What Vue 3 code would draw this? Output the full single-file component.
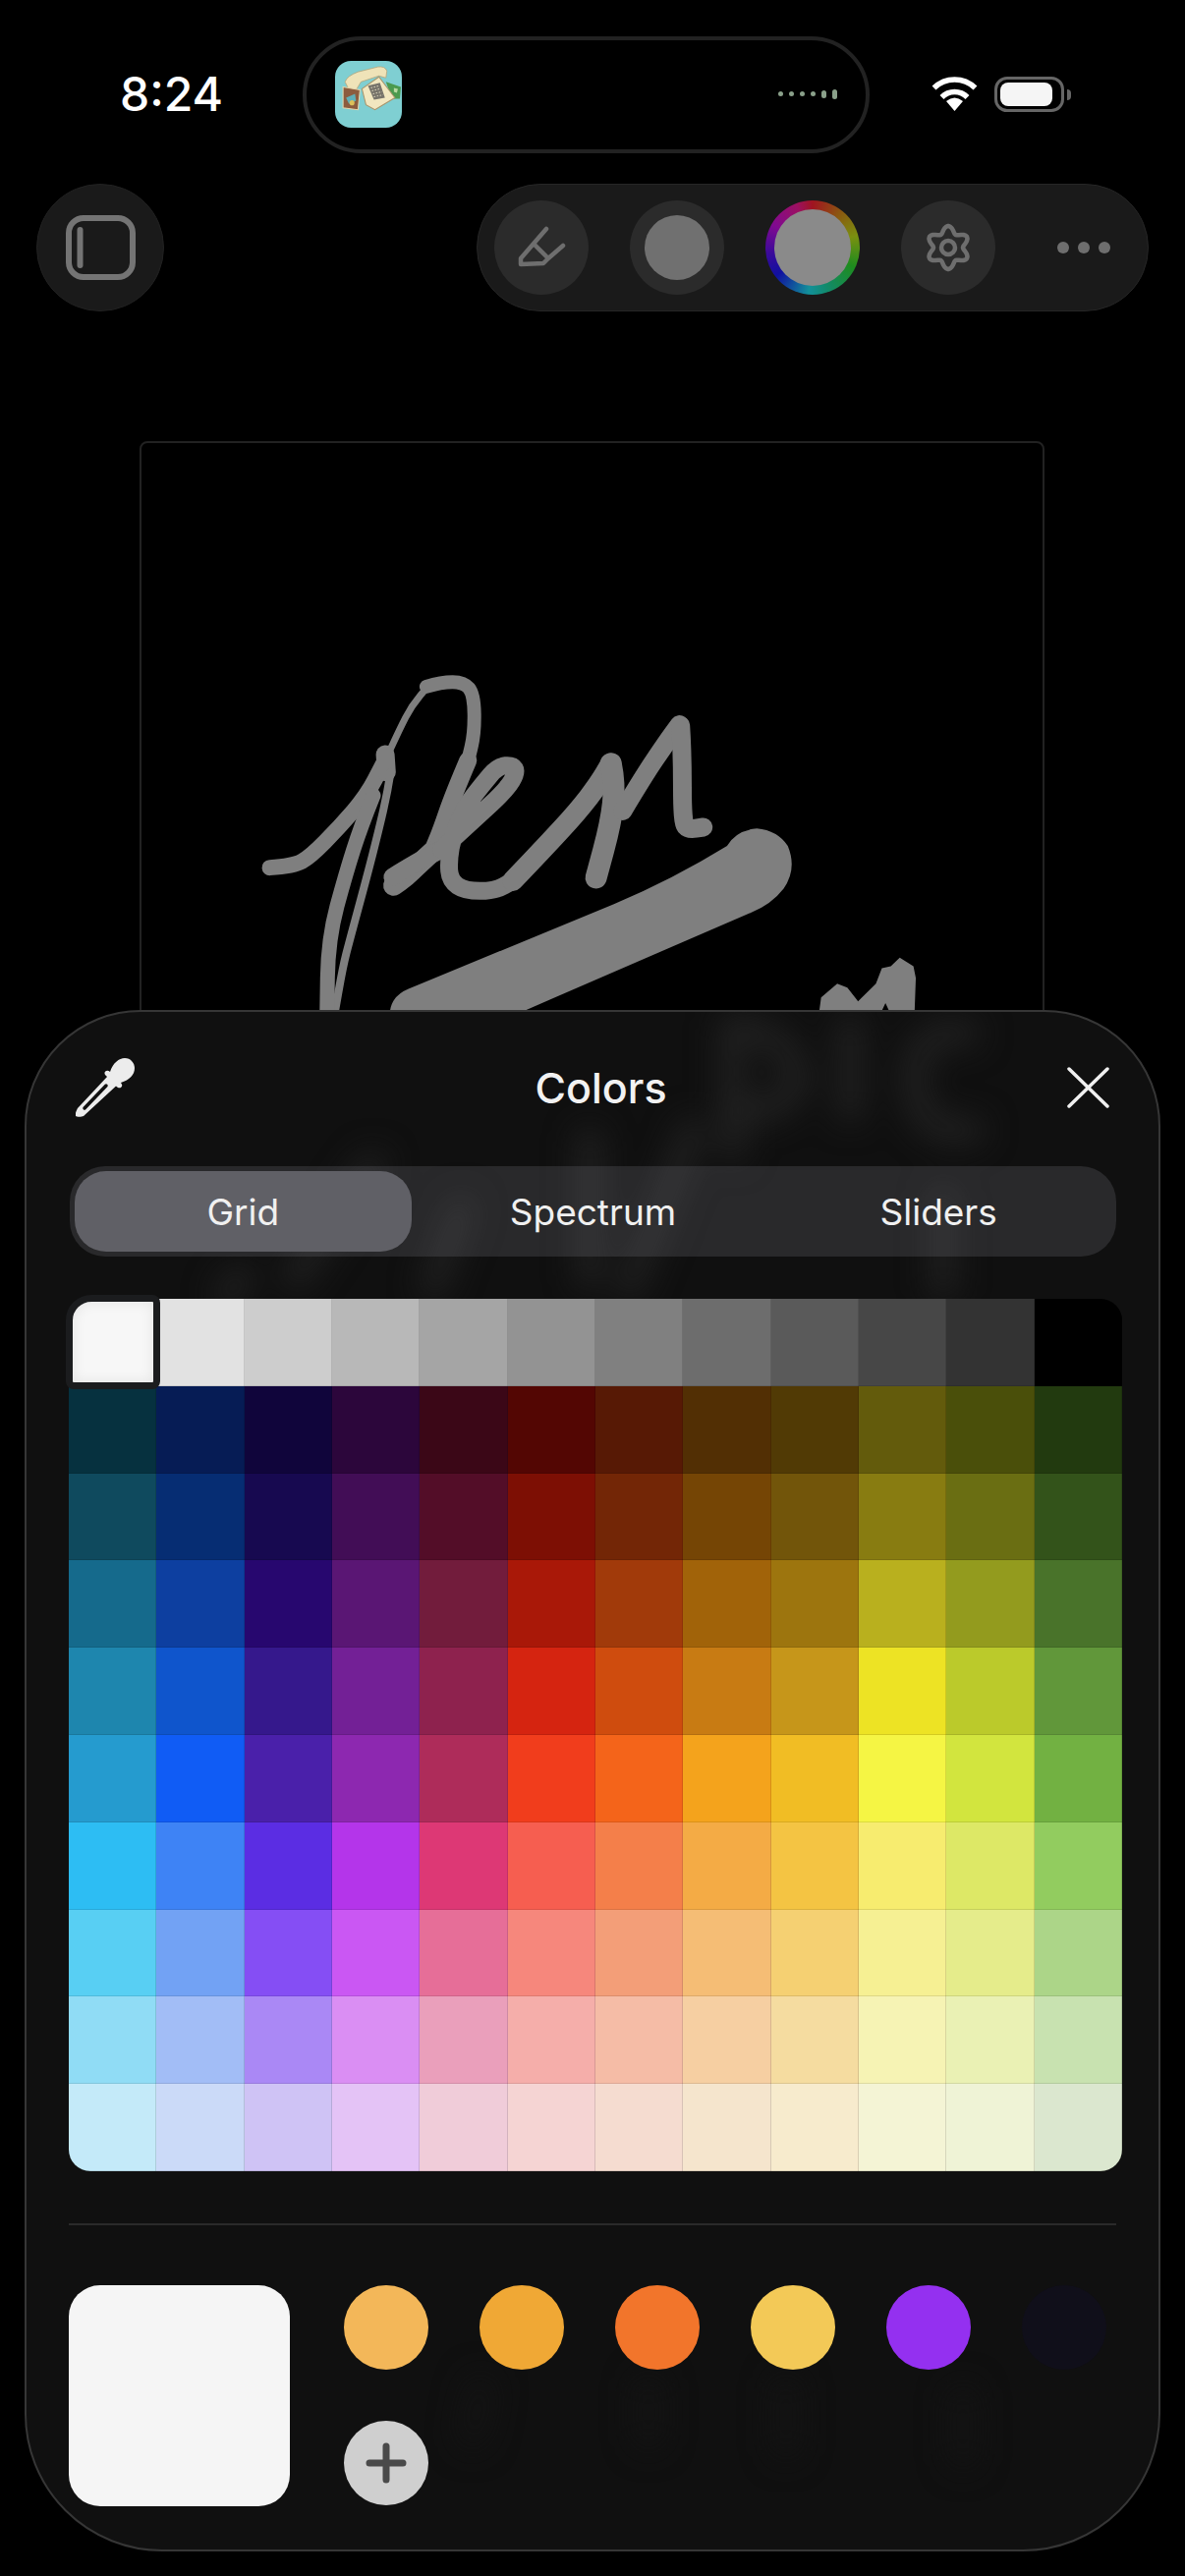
<template>
  <div class="screen">
    <div class="status">
      <span class="time">8:24</span>
      <div class="island">
        <svg class="app-icon" viewBox="0 0 67 67">
          <rect width="67" height="67" rx="16" fill="#7fcfd2" />
          <path d="M51 21 L66 26 L65 38 L57 38 Z" fill="#4b9a4e" />
          <path d="M59 27 L63 28 L62 32 L59 31 Z" fill="#b7d9a0" />
          <path d="M10 21 Q12 15 23 11 L43 6 Q50 5 52 10 L51 17 L44 15 L26 21 L20 31 L13 27 Z" fill="#efe3b8" stroke="#b5a67c" stroke-width=".8" />
          <path d="M27 28 L44 16 L60 37 L40 49 L31 44 Z" fill="#f2e7c0" stroke="#a8946a" stroke-width="1" />
          <path d="M33 25 L45 22 L50 37 L39 39 Z" fill="#77736a" />
          <path d="M36 27 L44 25 M37 30 L45 28 M38 33 L47 31 M39 36 L48 34" stroke="#d8d2b8" stroke-width="1" stroke-dasharray="1.500 1.500" />
          <path d="M8 26 L25 29 L23 49 L8 47 Z" fill="#8c5c3e" stroke="#e6d7ad" stroke-width="1" />
          <path d="M11 37 L20 33 L21 40 L14 43 Z" fill="#5fb0b8" />
          <circle cx="17" cy="42" r="2.500" fill="#dcc05a" />
        </svg>
        <div class="activity">
          <i v-for="h in activityBars" :key="h.id" :style="{ height: h.size + 'px', width: h.w + 'px' }"></i>
        </div>
      </div>
      <svg class="wifi" viewBox="0 0 47 36" fill="none" stroke="#fff" stroke-width="5.5">
        <path d="M2.5 11.5 A30 30 0 0 1 44.5 11.5" />
        <path d="M10.5 21 A18 18 0 0 1 36.5 21" />
        <path d="M15 25 Q23.5 18 32 25 L23.5 35 Z" fill="#fff" stroke="none" />
      </svg>
      <div class="battery">
        <div class="battery-fill"></div>
      </div>
      <div class="battery-nub"></div>
    </div>

    <div class="tools">
      <button class="round-btn">
        <svg width="71" height="66" viewBox="0 0 71 66" fill="none" stroke="#747474" stroke-width="6">
          <rect x="3" y="3" width="65" height="60" rx="15" />
          <path d="M14.5 15 V51" stroke-linecap="round" />
        </svg>
      </button>
      <div class="toolbar">
        <div class="tool">
          <svg width="50" height="44" viewBox="0 0 50 44" fill="none" stroke="#6e6e6e" stroke-width="4.5" stroke-linecap="round" stroke-linejoin="round">
            <path d="M30 3 L17 18 L4 33 V39 L27 38 L32 33 L17 18 M32 33 L47 20" />
          </svg>
        </div>
        <div class="tool">
          <div class="disc"></div>
        </div>
        <div class="wheel">
          <div class="wheel-disc"></div>
        </div>
        <div class="tool">
          <svg width="52" height="52" viewBox="-26 -26 52 52" fill="none" stroke="#6e6e6e" stroke-width="4.5">
            <path :d="gearPath" stroke-linejoin="round" />
            <circle r="7" />
          </svg>
        </div>
        <div class="more">
          <i></i><i></i><i></i>
        </div>
      </div>
    </div>

    <div class="canvas-frame">
      <svg class="drawing" width="921" height="640" fill="none" stroke="#7f7f7f" stroke-linecap="round" stroke-linejoin="round">
        <g transform="translate(-4 -21) scale(.606 .3954)">
          <path v-for="s in strokes" :key="s.id" :d="smooth(s.points)" :stroke-width="s.width" vector-effect="non-scaling-stroke" />
          <path d="M1040 1045 Q1075 1050 1092 1090 Q1108 1150 1085 1200 Q1065 1240 1030 1262 L900 1348 L650 1514 H424 Q428 1475 455 1458 L480 1442 L800 1240 Q900 1175 990 1090 Q1005 1050 1040 1045 Z" fill="#7f7f7f" stroke="none" />
          <path d="M1145 1514 L1148 1480 L1175 1445 L1192 1455 L1210 1490 L1240 1445 L1250 1405 L1265 1400 L1280 1378 L1303 1400 L1307 1430 L1305 1514 H1262 L1256 1495 L1250 1514 Z" fill="#7f7f7f" stroke="none" />
        </g>
      </svg>
    </div>

    <div class="panel">
      <svg class="ghost" viewBox="25 1028 1156 1569" fill="none" stroke="#222" stroke-width="24" stroke-linecap="round">
        <path d="M745 1045 V1170 M745 1045 Q805 1050 812 1100 Q800 1132 750 1132" />
        <path d="M865 1045 V1130" />
        <path d="M985 1052 Q930 1045 930 1100 Q935 1160 990 1150" />
        <path d="M600 1160 V1300 M705 1150 Q665 1250 640 1310" />
        <path d="M380 1185 L300 1300 M245 1300 L230 1320 M470 1230 L440 1310 M960 1220 V1310" />
        <path d="M490 2430 L480 2480 M660 2430 V2480 M800 2430 V2490 M980 2440 V2500" stroke="#141414" />
      </svg>

      <div class="header">
        <svg width="60" height="60" viewBox="0 0 60 60" fill="#ececec">
          <path d="M35 14 C38 5 44 0 50 0 C56 0 60 5 60 10 C60 17 55 22 46 25 L46.500 26 C48.500 28 46 31.500 43 30 L41 28.500 L8 59 C6 60 1 60 0 59 C-1 57 1 53 2 51 L32 19 L30 17 C28 14 32 11 35 14 Z" />
          <path d="M9 51 L31 28" stroke="#101010" stroke-width="3.500" stroke-linecap="round" />
        </svg>
        <h1>Colors</h1>
        <svg width="43" height="42" viewBox="0 0 43 42" fill="none" stroke="#f0f0f0" stroke-width="3.500" stroke-linecap="round">
          <path d="M2 2 L41 40 M41 2 L2 40" />
        </svg>
      </div>

      <div class="segmented">
        <div v-for="tab in tabs" :key="tab" class="segment" :class="{ active: tab === 'Grid' }">{{ tab }}</div>
      </div>

      <div class="grid-wrap">
        <div class="grid">
          <div v-for="cell in cells" :key="cell.id" class="cell" :style="{ background: cell.color }"></div>
        </div>
        <div class="selected"></div>
      </div>

      <div class="divider"></div>

      <div class="bottom">
        <div class="current"></div>
        <div class="saved">
          <div v-for="c in saved" :key="c" class="dot" :style="{ background: c }"></div>
          <div class="dot add">
            <svg width="42" height="42" viewBox="0 0 42 42" stroke="#4a4a4a" stroke-width="7" stroke-linecap="round">
              <path d="M21 4 V38 M4 21 H38" />
            </svg>
          </div>
        </div>
      </div>
    </div>
  </div>
</template>

<script setup>
const tabs = ['Grid', 'Spectrum', 'Sliders']
const saved = ['#f3b759', '#f0a835', '#f2752b', '#f3c957', '#9430f0', '#100f1a']

const activityBars = [
  { id: 1, size: 5, w: 5 },
  { id: 2, size: 5, w: 5 },
  { id: 3, size: 5, w: 5 },
  { id: 4, size: 5, w: 5 },
  { id: 5, size: 8, w: 5 },
  { id: 6, size: 10, w: 5 },
]

const palette = [
  'f5f5f5 e2e2e2 cdcdcd b8b8b8 a5a5a5 939393 808080 6d6d6d 5a5a5a 474747 333333 000000',
  '06313f 061c55 10053b 2c063b 3b0717 530603 571905 522f04 513a05 635b0c 4a4f0a 223a0f',
  '0f4a5e 062d73 170950 420d56 530d28 7d0f04 732606 754505 72550a 887c11 6a6e12 33531a',
  '156a8c 0d3fa0 27076f 5a1674 721c3c a91808 a13a0a a16309 9d750e b9b01e 939b1e 49732a',
  '1e86ae 0f55cc 35188c 732096 8e224e d52410 cf4c0e c87b13 c6961a ede324 bbca2b 61973a',
  '259bcf 105cf5 4a20aa 8d28b0 ae2c5a f13d1c f4641a f4a31c f1bd24 f5f544 d2e53e 72b142',
  '2dbdf3 3e83f5 5b2de3 b435ea dd3875 f65e50 f47f4a f4ab45 f4c443 f7ec6f dde866 92cc5f',
  '58cff3 72a2f4 854ef4 ca57f3 e66e98 f6877c f39e78 f5bd75 f5d072 f6f093 e5ec8b acd588',
  '90dcf5 a2bdf6 aa88f5 da8ef3 ea9fbb f5aeaa f5bca6 f6cfa2 f5dca0 f6f3b4 eaf1b4 c8e2b0',
  'c4eaf9 cbdaf8 cfc3f5 e4c3f6 f0ccd9 f5d4d3 f5dcd0 f5e5cd f7ebcd f4f4d5 eff3d6 dbe7cf',
]

const cells = palette.flatMap((row, r) =>
  row.split(' ').map((hex, c) => ({ id: `${r}-${c}`, color: '#' + hex }))
)

// six soft lobes, one pointing straight up
const gearPath = (() => {
  const pts = []
  for (let a = 0; a < 360; a += 5) {
    const rad = (a * Math.PI) / 180
    const r = 18.5 + 3.5 * Math.cos(6 * rad)
    pts.push(`${(r * Math.sin(rad)).toFixed(2)} ${(-r * Math.cos(rad)).toFixed(2)}`)
  }
  return 'M' + pts.join(' L') + ' Z'
})()

// round off a point list with quadratics through the midpoints
const smooth = (str) => {
  const pts = str.split(' ').map((p) => p.split(',').map(Number))
  if (pts.length < 3) return 'M' + pts.map((p) => p.join(' ')).join(' L')
  let d = `M${pts[0].join(' ')}`
  for (let i = 1; i < pts.length - 1; i++) {
    const mx = (pts[i][0] + pts[i + 1][0]) / 2
    const my = (pts[i][1] + pts[i + 1][1]) / 2
    d += ` Q${pts[i].join(' ')} ${mx} ${my}`
  }
  return d + ` L${pts[pts.length - 1].join(' ')}`
}

// handwriting on the canvas, points taken from the reference
const strokes = [
  { id: 'lead', width: 16, points: '222,1146 262,1142 290,1118 340,1040 385,960 412,880' },
  { id: 'tick', width: 19, points: '416,855 418,900' },
  { id: 'loop', width: 7, points: '425,840 440,790 460,730 490,675' },
  { id: 'loop2', width: 14, points: '485,680 510,668 548,668 565,700 566,800 555,870' },
  { id: 'stem', width: 18, points: '555,870 530,960 510,1050 495,1105' },
  { id: 'foot', width: 21, points: '495,1105 470,1140 450,1170 430,1192' },
  { id: 'foot2', width: 18, points: '428,1170 470,1130 510,1100' },
  { id: 'e1', width: 18, points: '510,1100 560,1030 620,945 637,900 630,882 605,885 580,930 550,990 530,1060 522,1130 525,1180 550,1206 600,1206 630,1180' },
  { id: 'n1', width: 21, points: '630,1180 680,1100 740,1000 775,930 795,878' },
  { id: 'n2', width: 22, points: '795,878 802,930 795,1030 770,1172' },
  { id: 'n3', width: 19, points: '815,1000 850,910 890,820 910,778' },
  { id: 'n4', width: 19, points: '912,780 915,850 915,1030 925,1048 950,1042' },
  { id: 'down1', width: 8, points: '425,900 420,950 405,1050 385,1170 355,1340 345,1400 330,1530' },
  { id: 'down2', width: 15, points: '396,960 375,1040 350,1160 320,1330 318,1530' },
]
</script>

<style scoped>
.screen {
  position: relative;
  width: 1206px;
  height: 2622px;
  overflow: hidden;
  background: #000;
  padding-top: 37px;
  box-sizing: border-box;
  font-family: Inter, 'Liberation Sans', sans-serif;
  color: #f5f5f5;
}

.status {
  display: flex;
  align-items: center;
  height: 119px;
  padding-left: 122px;
}
.time {
  width: 186px;
  font-size: 48px;
  font-weight: 500;
  color: #fff;
  margin-top: -3px;
}
.island {
  width: 577px;
  height: 119px;
  box-sizing: border-box;
  border: 4px solid #222;
  border-radius: 60px;
  display: flex;
  align-items: center;
  justify-content: space-between;
  padding: 0 29px 0 29px;
  margin-right: 63px;
}
.app-icon {
  width: 68px;
  height: 68px;
  margin-top: -2px;
}
.activity {
  display: flex;
  align-items: center;
  gap: 6px;
  margin-top: -2px;
}
.activity i {
  display: block;
  border-radius: 3px;
  background: #8aa08a;
}
.wifi {
  width: 47px;
  height: 36px;
  margin-right: 17px;
  margin-top: -1px;
}
.battery {
  width: 71px;
  height: 36px;
  box-sizing: border-box;
  border: 3px solid #666;
  border-radius: 13px;
  padding: 3px;
  margin-top: -1px;
}
.battery-fill {
  width: 53px;
  height: 24px;
  background: #f5f5f5;
  border-radius: 8px;
}
.battery-nub {
  width: 4px;
  height: 11px;
  margin-left: 3px;
  border-radius: 0 4px 4px 0;
  background: #666;
}

.tools {
  display: flex;
  justify-content: space-between;
  padding: 0 37px;
  margin-top: 31px;
}
.round-btn {
  width: 130px;
  height: 130px;
  border: 1px solid #222;
  box-sizing: border-box;
  border-radius: 50%;
  background: #1a1a1a;
  padding: 0;
  display: flex;
  align-items: center;
  justify-content: center;
}
.toolbar {
  width: 684px;
  height: 130px;
  box-sizing: border-box;
  border: 1px solid #262626;
  border-radius: 65px;
  background: #1a1a1a;
  padding: 0 17px;
  display: flex;
  align-items: center;
  gap: 42px;
}
.tool {
  width: 96px;
  height: 96px;
  border-radius: 50%;
  background: #2b2b2b;
  display: flex;
  align-items: center;
  justify-content: center;
}
.disc {
  width: 66px;
  height: 66px;
  border-radius: 50%;
  background: #707070;
}
.wheel {
  width: 96px;
  height: 96px;
  border-radius: 50%;
  background: conic-gradient(#a01420, #8a5a10 40deg, #7a9010 75deg, #1e8c1e 115deg, #128a6a 160deg, #12909a 185deg, #1010a0 232deg, #3a0a9a 262deg, #800a90 300deg, #9c1060 340deg, #a01420);
  display: flex;
  align-items: center;
  justify-content: center;
}
.wheel-disc {
  width: 78px;
  height: 78px;
  border-radius: 50%;
  background: #8a8a8a;
}
.more {
  width: 96px;
  display: flex;
  justify-content: center;
  gap: 9px;
}
.more i {
  display: block;
  width: 12px;
  height: 12px;
  border-radius: 50%;
  background: #6e6e6e;
}

.canvas-frame {
  position: relative;
  width: 921px;
  height: 700px;
  margin: 132px 0 0 142px;
  box-sizing: border-box;
  border: 2px solid #222;
  border-radius: 8px;
}
.drawing {
  position: absolute;
  left: 0;
  top: 0;
}

.panel {
  position: absolute;
  left: 25px;
  top: 1028px;
  width: 1156px;
  height: 1569px;
  box-sizing: border-box;
  border: 2px solid #363636;
  border-radius: 118px 118px 140px 140px;
  background: #101010;
  padding: 47px 43px 0 43px;
  overflow: hidden;
}
.ghost {
  position: absolute;
  left: -2px;
  top: -2px;
  width: 1156px;
  height: 1569px;
  filter: blur(16px);
}
.header {
  position: relative;
  display: flex;
  align-items: center;
  justify-content: space-between;
  height: 60px;
  padding: 0 7px;
  margin-bottom: 50px;
}
.header h1 {
  margin: 0;
  font-size: 43px;
  font-weight: 500;
  color: #f2f2f2;
}
.segmented {
  position: relative;
  height: 92px;
  margin-left: 1px;
  box-sizing: border-box;
  border-radius: 36px;
  background: rgba(120, 120, 130, 0.24);
  padding: 5px;
  display: grid;
  grid-template-columns: repeat(3, 1fr);
  margin-bottom: 43px;
}
.segment {
  display: flex;
  align-items: center;
  justify-content: center;
  font-size: 37px;
  color: #f0f0f0;
  border-radius: 32px;
}
.segment.active {
  background: #606066;
  margin-right: 9px;
}
.grid-wrap {
  position: relative;
  width: 1072px;
  height: 888px;
}
.grid {
  display: grid;
  grid-template-columns: repeat(12, 1fr);
  grid-template-rows: repeat(10, 1fr);
  width: 100%;
  height: 100%;
  border-radius: 22px;
  overflow: hidden;
}
.cell {
  box-shadow: inset -1px 0 0 rgba(0, 0, 0, 0.12), inset 0 -1px 0 rgba(0, 0, 0, 0.1);
}
.selected {
  position: absolute;
  left: -3px;
  top: -4px;
  width: 96px;
  height: 96px;
  box-sizing: border-box;
  border: 7px solid #1b1c1e;
  border-radius: 26px 8px 8px 8px;
  background: #f7f7f7;
  box-shadow: inset 0 0 14px rgba(0, 0, 0, 0.08);
}
.divider {
  position: relative;
  height: 2px;
  background: #2a2a2a;
  margin-top: 53px;
  width: 1066px;
}
.bottom {
  position: relative;
  display: flex;
  margin-top: 61px;
}
.current {
  width: 225px;
  height: 225px;
  border-radius: 32px;
  background: #f5f5f5;
}
.saved {
  margin-left: 55px;
  display: grid;
  grid-template-columns: repeat(6, 86px);
  grid-auto-rows: 86px;
  gap: 52px;
}
.dot {
  border-radius: 50%;
}
.add {
  background: #cfcfcf;
  display: flex;
  align-items: center;
  justify-content: center;
}
</style>

<style>
html,
body {
  background: #000;
}
</style>
